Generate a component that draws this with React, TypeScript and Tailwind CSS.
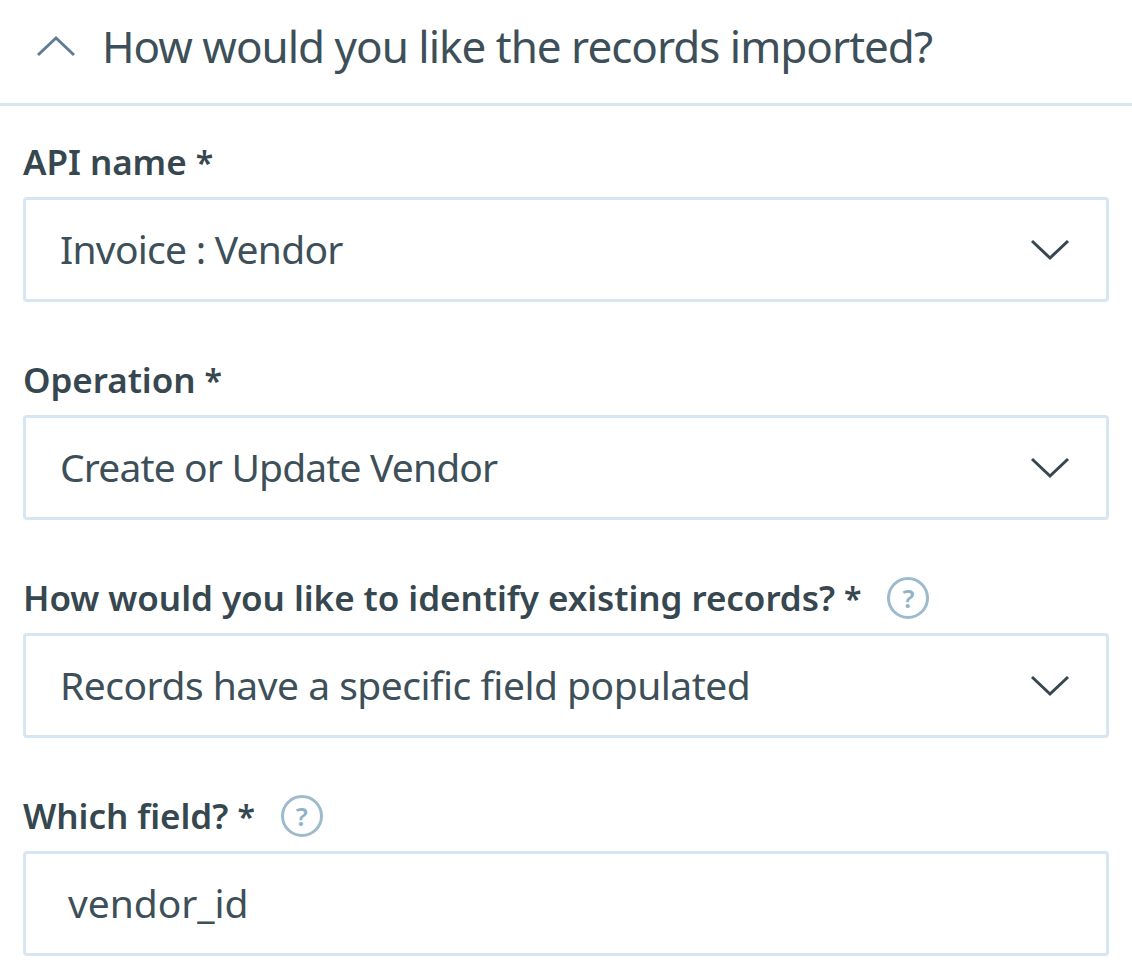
import React from 'react';

const font = 'font-["Noto_Sans",sans-serif]';

function Chevron({ up = false }: { up?: boolean }) {
  return (
    <svg width="40" height="24" viewBox="0 0 40 24" fill="none" className="shrink-0">
      <path
        d={up ? 'M2 21 L20 4 L38 21' : 'M2 3 L20 20 L38 3'}
        stroke={up ? '#5f7d8f' : '#36474f'}
        strokeWidth="3"
      />
    </svg>
  );
}

function Help() {
  return (
    <span className="flex h-[42px] w-[42px] shrink-0 items-center justify-center rounded-full border-[3px] border-[#9dbbcd] text-[26px] font-semibold leading-none text-[#8fb2c8]">
      ?
    </span>
  );
}

function Field({ label, value, help, select = true, valueClass }: { label: string; value: string; help?: boolean; select?: boolean; valueClass: string }) {
  return (
    <div className="flex flex-col">
      <div className="flex h-[70px] items-center">
        <span className="text-[35px] font-semibold tracking-[-0.05px] text-[#36474f]">
          {label} <span className="text-[32px]">*</span>
        </span>
        {help && <span className="ml-[26px]"><Help /></span>}
      </div>
      <div className={`flex h-[105px] items-center justify-between rounded-[4px] border-[3px] border-[#d6e6f2] bg-white pr-[36px] ${select ? 'pl-[34px]' : 'pl-[42px]'}`}>
        <span className={`text-[39px] text-[#3d4f59] ${valueClass}`}>{value}</span>
        {select && <Chevron />}
      </div>
    </div>
  );
}

export default function App() {
  return (
    <div className={`h-[972px] w-[1132px] overflow-hidden bg-white ${font}`}>
      <div className="flex h-[106px] items-center border-b-[3px] border-[#d6e6f2] pb-[12px] pl-[36px]">
        <Chevron up />
        <span className="ml-[26px] text-[44px] tracking-[-1px] text-[#3d4f59]">How would you like the records imported?</span>
      </div>
      <div className="flex flex-col gap-[43px] px-[23px] pt-[21px]">
        <Field label="API name" value="Invoice : Vendor" valueClass="tracking-[-0.75px]" />
        <Field label="Operation" value="Create or Update Vendor" valueClass="tracking-[-0.85px]" />
        <Field label="How would you like to identify existing records?" value="Records have a specific field populated" valueClass="tracking-[-0.5px]" help />
        <Field label="Which field?" value="vendor_id" valueClass="tracking-[-0.05px]" help select={false} />
      </div>
    </div>
  );
}
